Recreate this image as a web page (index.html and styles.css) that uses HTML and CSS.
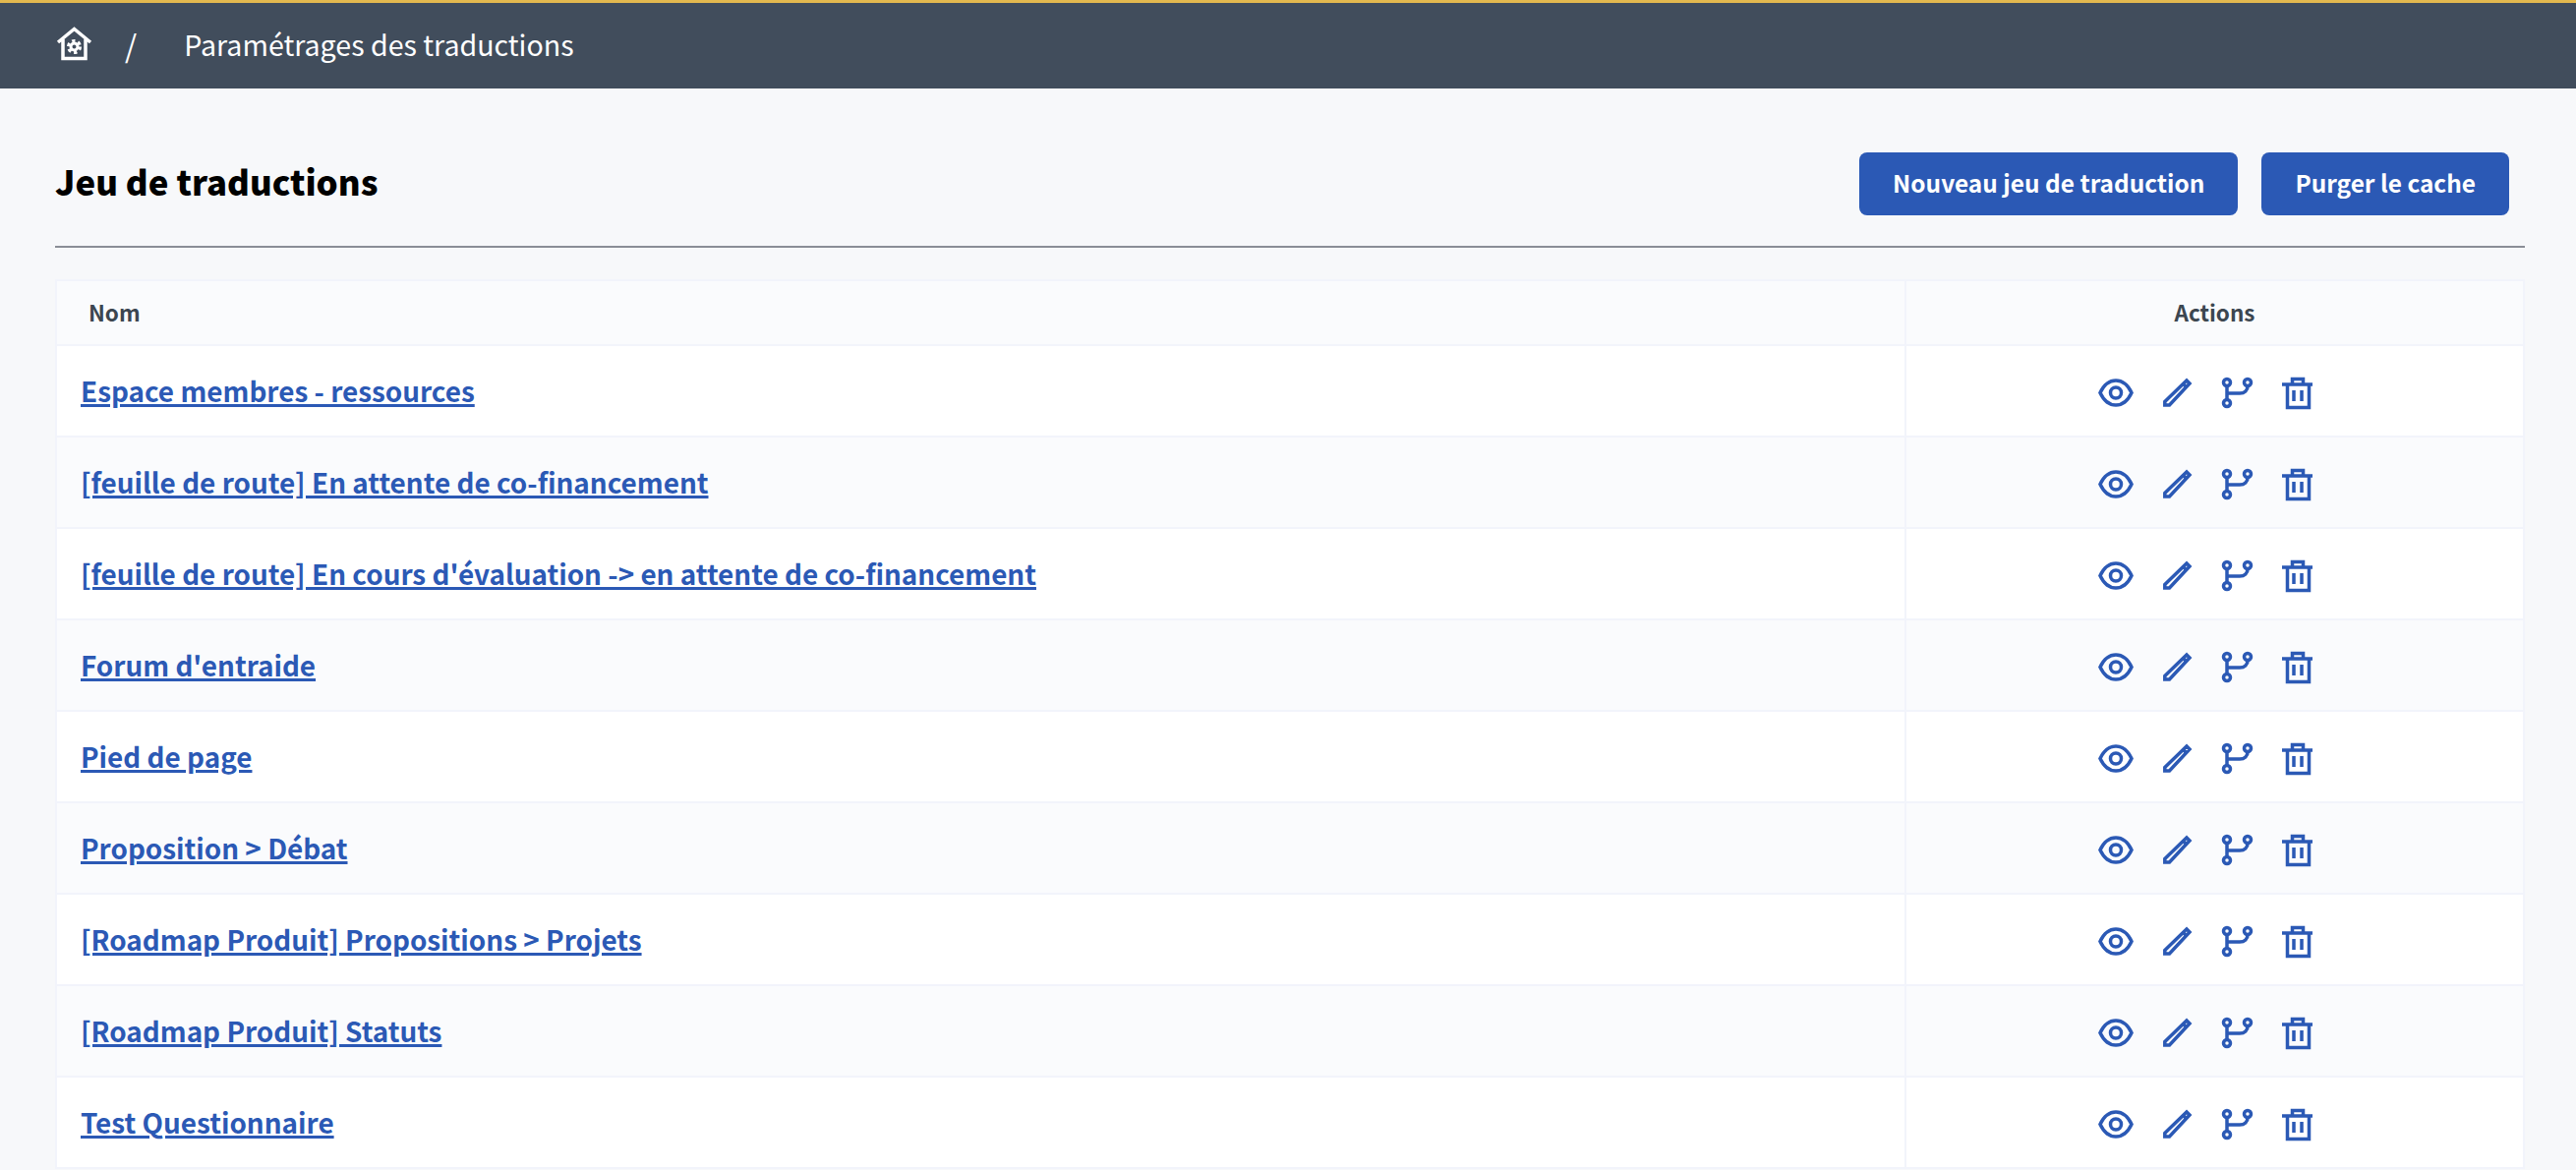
FILE: index.html
```html
<!DOCTYPE html>
<html lang="fr">
<head>
<meta charset="UTF-8">
<meta name="viewport" content="width=device-width, initial-scale=1.0">
<title>Paramétrages des traductions</title>
<link rel="stylesheet" href="styles.css">
</head>
<body>
<svg class="sprites" width="0" height="0">
  <symbol id="i-eye" viewBox="0 0 36 36">
    <path d="M2 17.500C6 9 11.500 5 18 5s12 4 16 12.500C30 26 24.500 30 18 30S6 26 2 17.500z"/>
    <circle cx="18" cy="17.500" r="5.500"/>
  </symbol>
  <symbol id="i-edit" viewBox="0 0 36 36">
    <path d="M5.800 26.500 28 5l3 3-20.500 22H5.800z"/>
    <path d="M24.500 8.500l3 3"/>
  </symbol>
  <symbol id="i-branch" viewBox="0 0 36 36">
    <circle cx="8" cy="7" r="3.500"/>
    <circle cx="8" cy="28" r="3.500"/>
    <circle cx="29" cy="7" r="3.500"/>
    <path d="M8 10.500v14M8 18h13c5 0 8-3 8-7.500"/>
  </symbol>
  <symbol id="i-trash" viewBox="0 0 36 36">
    <path d="M2 9h31M7.500 9v23.500h22V9M12.500 9V3.500h11V9M14 15v11M22 15v11"/>
  </symbol>
</svg>

<header class="topbar">
  <a class="home" href="#">
    <svg width="36" height="36" viewBox="0 0 36 36">
      <path class="home-line" d="M2 15 18.500 1.500 35 15M7 12v19.500h23V12"/>
      <circle class="home-hub" cx="18.500" cy="19.500" r="3.500"/>
      <circle class="home-gear" cx="18.500" cy="19.500" r="6"/>
    </svg>
  </a>
  <span class="sep">/</span>
  <span class="crumb">Paramétrages des traductions</span>
</header>

<main class="content">
  <div class="page-head">
    <h1>Jeu de traductions</h1>
    <div class="buttons">
      <a class="btn" href="#">Nouveau jeu de traduction</a>
      <a class="btn" href="#">Purger le cache</a>
    </div>
  </div>

  <table class="sets">
    <thead>
      <tr><th class="col-name">Nom</th><th class="col-actions">Actions</th></tr>
    </thead>
    <tbody>
      <tr>
        <td><a class="set-link" href="#">Espace membres - ressources</a></td>
        <td><div class="icons"><svg><use href="#i-eye"/></svg><svg><use href="#i-edit"/></svg><svg><use href="#i-branch"/></svg><svg><use href="#i-trash"/></svg></div></td>
      </tr>
      <tr>
        <td><a class="set-link" href="#">[feuille de route] En attente de co-financement</a></td>
        <td><div class="icons"><svg><use href="#i-eye"/></svg><svg><use href="#i-edit"/></svg><svg><use href="#i-branch"/></svg><svg><use href="#i-trash"/></svg></div></td>
      </tr>
      <tr>
        <td><a class="set-link" href="#">[feuille de route] En cours d'évaluation -&gt; en attente de co-financement</a></td>
        <td><div class="icons"><svg><use href="#i-eye"/></svg><svg><use href="#i-edit"/></svg><svg><use href="#i-branch"/></svg><svg><use href="#i-trash"/></svg></div></td>
      </tr>
      <tr>
        <td><a class="set-link" href="#">Forum d'entraide</a></td>
        <td><div class="icons"><svg><use href="#i-eye"/></svg><svg><use href="#i-edit"/></svg><svg><use href="#i-branch"/></svg><svg><use href="#i-trash"/></svg></div></td>
      </tr>
      <tr>
        <td><a class="set-link" href="#">Pied de page</a></td>
        <td><div class="icons"><svg><use href="#i-eye"/></svg><svg><use href="#i-edit"/></svg><svg><use href="#i-branch"/></svg><svg><use href="#i-trash"/></svg></div></td>
      </tr>
      <tr>
        <td><a class="set-link" href="#">Proposition &gt; Débat</a></td>
        <td><div class="icons"><svg><use href="#i-eye"/></svg><svg><use href="#i-edit"/></svg><svg><use href="#i-branch"/></svg><svg><use href="#i-trash"/></svg></div></td>
      </tr>
      <tr>
        <td><a class="set-link" href="#">[Roadmap Produit] Propositions &gt; Projets</a></td>
        <td><div class="icons"><svg><use href="#i-eye"/></svg><svg><use href="#i-edit"/></svg><svg><use href="#i-branch"/></svg><svg><use href="#i-trash"/></svg></div></td>
      </tr>
      <tr>
        <td><a class="set-link" href="#">[Roadmap Produit] Statuts</a></td>
        <td><div class="icons"><svg><use href="#i-eye"/></svg><svg><use href="#i-edit"/></svg><svg><use href="#i-branch"/></svg><svg><use href="#i-trash"/></svg></div></td>
      </tr>
      <tr>
        <td><a class="set-link" href="#">Test Questionnaire</a></td>
        <td><div class="icons"><svg><use href="#i-eye"/></svg><svg><use href="#i-edit"/></svg><svg><use href="#i-branch"/></svg><svg><use href="#i-trash"/></svg></div></td>
      </tr>
    </tbody>
  </table>
</main>
</body>
</html>
```

FILE: styles.css
```css
html, body {
  margin: 0;
  height: 100%;
  overflow: hidden;
}
body {
  font-family: "Noto Sans CJK SC", "Noto Sans", sans-serif;
  background-color: #f7f8fa;
  color: #000;
}
a { text-decoration: none; }
.sprites { position: absolute; }

.topbar {
  display: flex;
  align-items: center;
  height: 87px;
  padding: 0 57px;
  border-top: 3px solid #e3b94f;
  background-color: #414d5c;
  color: #fff;
  font-size: 28.600px;
}
.home {
  display: flex;
  width: 36px;
  height: 36px;
  margin-bottom: 2px;
}
.home svg { overflow: visible; }
.home-line {
  fill: none;
  stroke: #fff;
  stroke-width: 3.500;
}
.home-hub {
  fill: none;
  stroke: #fff;
  stroke-width: 3;
}
.home-gear {
  fill: none;
  stroke: #fff;
  stroke-width: 3;
  stroke-dasharray: 3.300 3;
}
.sep {
  margin: 0 0 3px 34px;
  font-size: 31px;
}
.crumb {
  margin: 0 0 5px 48px;
}

.content { padding: 0 52px 0 56px; }
.page-head {
  display: flex;
  justify-content: space-between;
  align-items: center;
  height: 127px;
  padding: 33px 16px 0 0;
  border-bottom: 2px solid #8a8e96;
  margin-bottom: 32px;
}
h1 {
  margin: 0 0 5px;
  font-size: 34.800px;
  font-weight: 900;
}
.buttons {
  display: flex;
  gap: 24px;
}
.btn {
  display: flex;
  align-items: center;
  box-sizing: border-box;
  height: 64px;
  padding: 0 34px 3px;
  border-radius: 8px;
  background-color: #2b59b5;
  color: #fff;
  font-size: 24.400px;
  font-weight: 700;
}

.sets {
  width: 100%;
  border-collapse: collapse;
  table-layout: fixed;
}
.sets th, .sets td {
  border: 2px solid #f2f4fb;
  padding: 0;
}
.sets th {
  height: 61px;
  padding-bottom: 3px;
  background-color: #fafbfd;
  color: #3c4650;
  font-size: 22.500px;
  font-weight: 700;
}
.col-name {
  text-align: left;
  padding-left: 32px !important;
}
.col-actions { width: 627px; }
.sets td {
  height: 91px;
  background-color: #fff;
}
.sets tbody tr:nth-child(even) td { background-color: #fafbfd; }
.sets td:first-child {
  height: 90px;
  padding: 0 0 1px 24px;
}
.set-link {
  color: #2b59b5;
  font-size: 27.900px;
  font-weight: 700;
  text-decoration: underline;
  text-decoration-thickness: 3px;
}
.icons {
  display: flex;
  justify-content: center;
  gap: 25.500px;
  padding: 4px 16px 0 0;
}
.icons svg {
  width: 36px;
  height: 36px;
  fill: none;
  stroke: #2b59b5;
  stroke-width: 3.500;
}
```
